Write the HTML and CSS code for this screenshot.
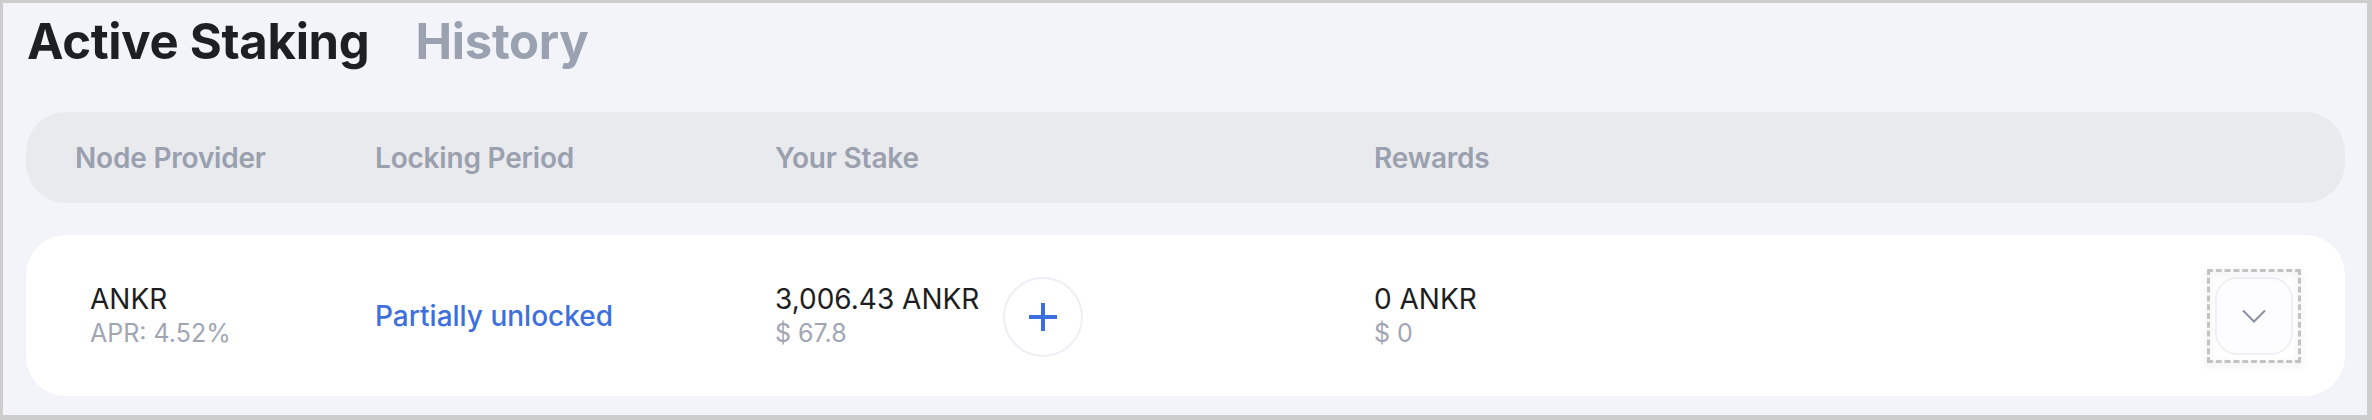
FILE: index.html
```html
<!DOCTYPE html>
<html lang="en">
<head>
<meta charset="utf-8">
<title>Active Staking</title>
<link rel="stylesheet" href="styles.css">
</head>
<body>
<div class="page">
  <div class="tabs">
    <span class="tab tab-active">Active Staking</span>
    <span class="tab">History</span>
  </div>
  <div class="table-head grid">
    <div class="th">Node Provider</div>
    <div class="th">Locking Period</div>
    <div class="th">Your Stake</div>
    <div class="th">Rewards</div>
    <div></div>
  </div>
  <div class="table-row grid">
    <div class="cell cell-first">
      <div class="main">ANKR</div>
      <div class="sub">APR: 4.52%</div>
    </div>
    <div class="cell">
      <span class="status">Partially unlocked</span>
    </div>
    <div class="cell stake">
      <div>
        <div class="main">3,006.43 ANKR</div>
        <div class="sub">$ 67.8</div>
      </div>
      <button class="plus" type="button" aria-label="Stake more">
        <svg width="28" height="28" viewBox="0 0 28 28"><path d="M14 0v28M0 14h28" stroke="#3b6fe1" stroke-width="4" fill="none"/></svg>
      </button>
    </div>
    <div class="cell">
      <div class="main">0 ANKR</div>
      <div class="sub">$ 0</div>
    </div>
    <div class="cell cell-last">
      <button class="expand" type="button" aria-label="Expand">
        <svg width="24" height="14" viewBox="0 0 24 14"><path d="M1 1.5l11 11 11-11" stroke="#8a90a2" stroke-width="2" fill="none"/></svg>
      </button>
    </div>
  </div>
</div>
</body>
</html>
```

FILE: styles.css
```css
* { box-sizing: border-box; }
html, body { margin: 0; padding: 0; }
body {
  background: #cdcdcd;
  font-family: Inter, "Noto Sans", sans-serif;
}
.page {
  margin: 3px 5px 5px 3px;
  height: 412px;
  background: #f3f4f9;
  padding: 10px 22px 0 23px;
}
.tabs {
  display: flex;
  gap: 46px;
  padding-left: 1px;
  height: 58px;
}
.tab {
  font-size: 49px;
  line-height: 58px;
  font-weight: 700;
  color: #9aa1b0;
  letter-spacing: -0.3px;
}
.tab-active { color: #1e1f23; }
.grid {
  display: grid;
  grid-template-columns: 300px 400px 599px 1fr auto;
  align-items: center;
}
.table-head {
  margin-top: 41px;
  height: 91px;
  border-radius: 40px;
  background: #e9eaee;
  padding-left: 49px;
}
.th {
  font-size: 28px;
  font-weight: 600;
  color: #9aa0ae;
  line-height: 34px;
  letter-spacing: -0.2px;
}
.table-row {
  margin-top: 32px;
  height: 161px;
  border-radius: 40px;
  background: #ffffff;
  padding-left: 49px;
  padding-right: 52px;
}
.cell-first { padding-left: 15px; }
.main {
  font-size: 28px;
  line-height: 34px;
  color: #1d1e22;
}
.sub {
  font-size: 25px;
  line-height: 34px;
  color: #a1a6b4;
}
.status {
  font-size: 28px;
  line-height: 34px;
  font-weight: 500;
  color: #3d6fdd;
}
.stake {
  display: flex;
  align-items: center;
  gap: 24px;
}
.plus {
  width: 80px;
  height: 80px;
  border-radius: 50%;
  border: 2px solid #eeeff6;
  background: #ffffff;
  display: flex;
  align-items: center;
  justify-content: center;
  padding: 0;
  margin-top: 2px;
}
.cell-last { display: flex; justify-content: flex-end; }
.expand {
  position: relative;
  width: 78px;
  height: 78px;
  border-radius: 22px;
  border: 2px solid #eef0f6;
  background: #fdfdff;
  display: flex;
  align-items: center;
  justify-content: center;
  padding: 0;
}
.expand::after {
  content: "";
  position: absolute;
  inset: -10px;
  border: 3px dashed #c3c3c3;
  filter: drop-shadow(0 3px 3px rgba(0, 0, 0, 0.12));
}
```
